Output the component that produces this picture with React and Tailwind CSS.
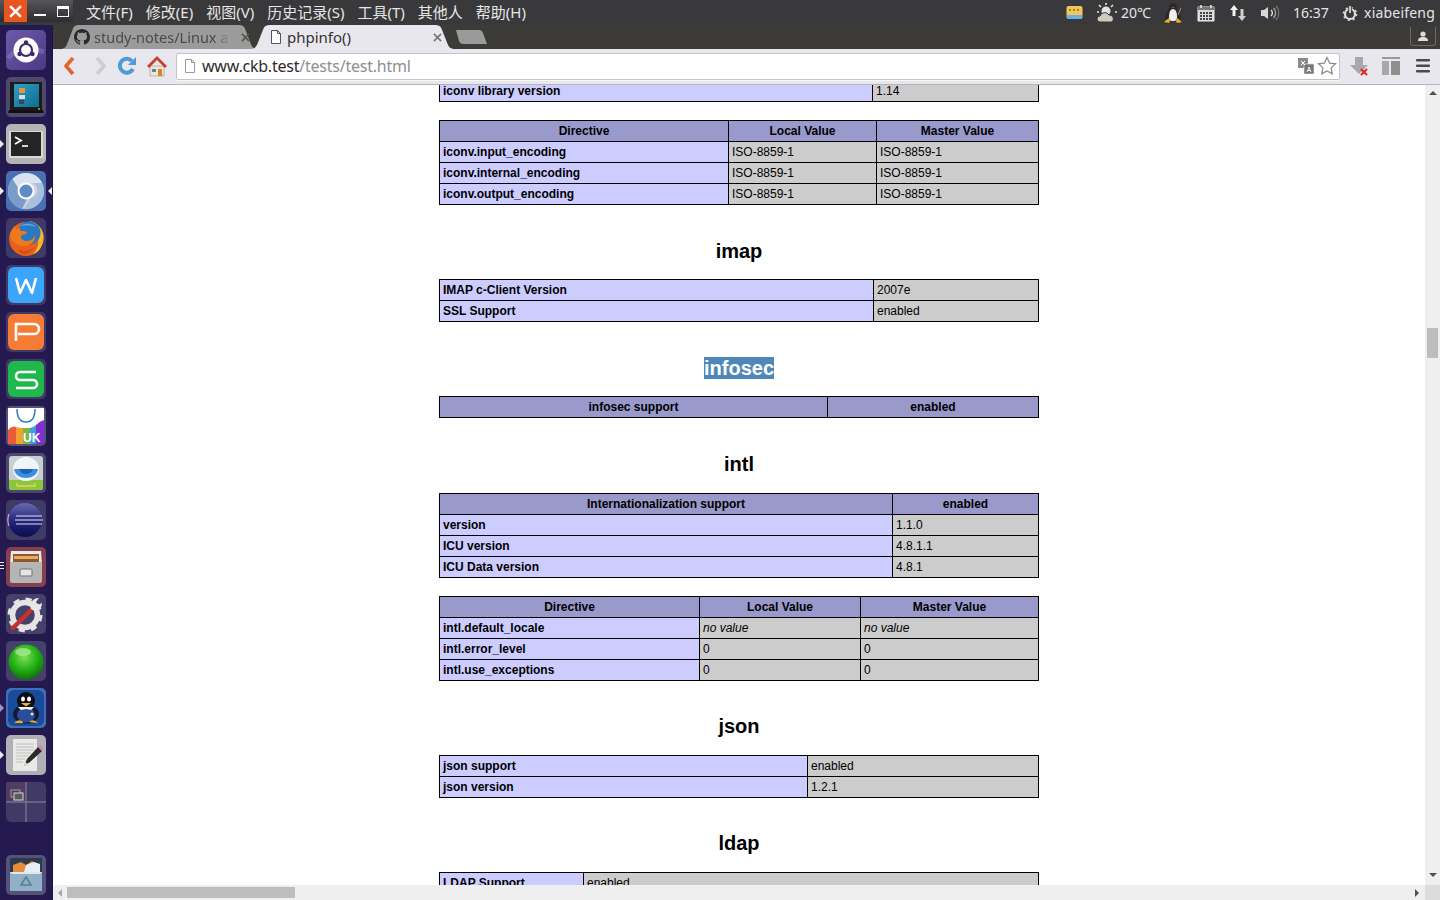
const Sec = ({ title, selected }) => (
  <h2 className="text-center text-[20px] leading-[23px] font-bold text-black">
    <span className={selected ? 'bg-[#4f87ba] text-white' : ''}>{title}</span>
  </h2>
);

const InfoTable = ({ widths, head, rows, className = '' }) => (
  <div className={`mx-auto w-[600px] ${className}`}>
    <table className="w-[599px] table-fixed border-collapse text-[12px] leading-[14px] text-black">
      <colgroup>
        {widths.map((w, i) => <col key={i} style={{ width: w }} />)}
      </colgroup>
      <tbody>
        {head && (
          <tr className="h-[21px] bg-[#9999cc] font-bold">
            {head.map((h, i) => <th key={i} className="border border-black px-[3px] py-0 text-center">{h}</th>)}
          </tr>
        )}
        {rows.map((r, i) => (
          <tr key={i} className="h-[21px]">
            {r.map((c, j) => (
              <td key={j} className={`border border-black px-[3px] py-0 whitespace-nowrap ${j === 0 ? 'bg-[#ccccff] font-bold' : 'bg-[#cccccc]'} ${c === 'no value' ? 'italic' : ''}`}>{c}</td>
            ))}
          </tr>
        ))}
      </tbody>
    </table>
  </div>
);

const Tile = ({ bg = 'bg-[#3f3a66]', children, left, right }) => (
  <div className={`relative h-10 w-10 shrink-0 rounded-[5px] ${bg}`}>
    {children}
    {left === 'solid' && <span className="absolute top-[16px] left-[-6px] h-0 w-0 border-y-[4px] border-l-[4px] border-y-transparent border-l-[#e8e8e8]" />}
    {left === 'outline' && <span className="absolute top-[16px] left-[-6px] h-0 w-0 border-y-[4px] border-l-[4px] border-y-transparent border-l-[#9a9ac0]" />}
    {left === 'lines' && (
      <span className="absolute top-[15px] left-[-6px] flex w-[4px] flex-col gap-[2px]">
        <i className="h-px bg-[#e8e8e8]" /><i className="h-px bg-[#e8e8e8]" /><i className="h-px bg-[#e8e8e8]" />
      </span>
    )}
    {right && <span className="absolute top-[16px] right-[-6px] h-0 w-0 border-y-[4px] border-r-[4px] border-y-transparent border-r-[#e8e8e8]" />}
  </div>
);

const Ico = ({ children }) => <svg viewBox="0 0 40 40" className="h-10 w-10">{children}</svg>;

const Launcher = () => (
  <aside className="flex w-[53px] shrink-0 flex-col items-start border-r border-[#1d1440] bg-[#251a50] pt-[5px] pl-[6px]">
    <div className="flex flex-col gap-[7px]">
      <Tile bg="bg-gradient-to-br from-[#6d5aa8] to-[#4a3a85]">
        <Ico>
          <path d="M2 28 Q14 14 38 22" stroke="#8d7cc0" strokeWidth="5" fill="none" opacity=".5" />
          <circle cx="20" cy="20" r="12.500" fill="#fff" />
          <circle cx="20" cy="20" r="6" fill="none" stroke="#3a2a70" strokeWidth="2.200" />
          <circle cx="20" cy="12.500" r="2.200" fill="#3a2a70" />
          <circle cx="13.500" cy="24" r="2.200" fill="#3a2a70" />
          <circle cx="26.500" cy="24" r="2.200" fill="#3a2a70" />
        </Ico>
      </Tile>
      <Tile bg="bg-[#4d4a6d]">
        <Ico>
          <path d="M4 5h32v28H4z" fill="#1b1b1b" />
          <defs><linearGradient id="scr" x1="0" y1="0" x2="1" y2="1"><stop offset="0" stopColor="#2f9fc8" /><stop offset="1" stopColor="#0f6d90" /></linearGradient></defs>
          <path d="M8 7h25v23H8z" fill="url(#scr)" />
          <path d="M13 11h6v5h-6z" fill="#e8943c" />
          <path d="M13 18h6v4h-6z" fill="#d8dde2" />
          <path d="M13 23h5v4h-5z" fill="#39455a" />
          <path d="M3 33h34l1 3H2z" fill="#111" />
          <circle cx="33" cy="32" r="1" fill="#5ed040" />
        </Ico>
      </Tile>
      <Tile bg="bg-[#b4b4b4]" left="solid">
        <Ico>
          <path d="M3 7h34v27H3z" fill="#d9d9d9" />
          <path d="M5 8h30v24H5z" fill="#242424" />
          <path d="M9 13l6 3.500-6 3.500" fill="none" stroke="#fff" strokeWidth="1.800" />
          <path d="M16 22h6" stroke="#fff" strokeWidth="1.600" />
        </Ico>
      </Tile>
      <Tile bg="bg-[#4a70b4]" left="solid" right>
        <Ico>
          <circle cx="20" cy="20" r="18" fill="#c6d4e6" />
          <path d="M20 2a18 18 0 0 1 16 10H20a8 8 0 0 0-7.500 5L6.500 8A18 18 0 0 1 20 2z" fill="#d9e2ee" />
          <path d="M2 20a18 18 0 0 1 4.500-12l7 11 7.500 9-5 10A18 18 0 0 1 2 20z" fill="#7a9cc8" />
          <path d="M36 12a18 18 0 0 1-18 26l7-11a8 8 0 0 0 2-15z" fill="#a9bfdc" />
          <circle cx="20" cy="20" r="8.500" fill="#fff" />
          <circle cx="20" cy="20" r="6.500" fill="#5e8cc6" />
        </Ico>
      </Tile>
      <Tile>
        <Ico>
          <circle cx="20" cy="21" r="17" fill="#e8601c" />
          <path d="M24 3a17 17 0 0 1 12 24c-2 5-5 8-9 9 5-5 7-12 4-19-2-5-4-10-7-14z" fill="#f8b62a" />
          <circle cx="23" cy="15" r="11.500" fill="#2a78c0" />
          <path d="M14 8c5-3 12-3 16 1-5-2-10-2-16-1z" fill="#5fb0e4" />
          <path d="M4 17c1-4 3-7 5-9l1 4c1-1 2-2 4-3-1 2 0 3 1 4 2 0 5 0 6 2-1 2-5 1-6 3-1 3 3 5 6 5 4 0 7-3 8-6 1 6-4 11-11 11C10 28 5 23 4 17z" fill="#ef7a1e" />
          <path d="M12 31c5 3 12 2 16-2-2 5-8 8-13 6-1 0-2-2-3-4z" fill="#d84a14" />
        </Ico>
      </Tile>
      <Tile>
        <Ico>
          <rect x="2" y="2" width="36" height="36" rx="6" fill="#3aa5fa" />
          <path d="M10 13l4 15 6-13 6 13 4-15" fill="none" stroke="#fff" strokeWidth="2.600" strokeLinejoin="round" />
        </Ico>
      </Tile>
      <Tile>
        <Ico>
          <rect x="2" y="2" width="36" height="36" rx="6" fill="#f67b35" />
          <path d="M10 29V12h18a4.500 4.500 0 0 1 0 10H12" fill="none" stroke="#fff" strokeWidth="2.600" />
        </Ico>
      </Tile>
      <Tile>
        <Ico>
          <rect x="2" y="2" width="36" height="36" rx="6" fill="#1fb84c" />
          <path d="M30 13H14a4 4 0 0 0 0 8h13a4 4 0 0 1 0 8H10" fill="none" stroke="#fff" strokeWidth="2.600" />
        </Ico>
      </Tile>
      <Tile bg="bg-[#55527a]">
        <Ico>
          <path d="M2 2h36v36H2z" fill="#fff" />
          <path d="M11 3c0 10 4 13 9 13s9-3 9-13" fill="none" stroke="#2f7fc0" strokeWidth="1.500" />
          <path d="M2 24q4-5 8-3v17H2z" fill="#ea5b3a" />
          <path d="M10 21q4 1 7 1v16h-7z" fill="#f2a02f" />
          <path d="M17 22h7v16h-7z" fill="#78b83a" />
          <path d="M24 22q4-1 6-3v19h-6z" fill="#3ba0dc" />
          <path d="M30 19q4-4 8-5v24h-8z" fill="#8030d8" />
          <text x="17" y="36" fontFamily="Liberation Sans" fontWeight="700" fontSize="12" fill="#fff">UK</text>
        </Ico>
      </Tile>
      <Tile bg="bg-[#4c4a6c]">
        <Ico>
          <rect x="3" y="3" width="34" height="34" rx="3" fill="#c9ced2" />
          <path d="M3 27h34v7a3 3 0 0 1-3 3H6a3 3 0 0 1-3-3z" fill="#8cc63a" />
          <ellipse cx="20" cy="16" rx="13" ry="12" fill="#f2f5f8" />
          <path d="M8 16h24c-1 6-6 9-12 9S9 22 8 16z" fill="#3b8fe0" />
          <path d="M13 16h14c-1 3-4 5-7 5s-6-2-7-5z" fill="#1d62b6" />
          <path d="M11 30v3h18v-3" fill="none" stroke="#e6d45c" strokeWidth="1.300" />
        </Ico>
      </Tile>
      <Tile>
        <Ico>
          <defs><linearGradient id="ecl" x1="0" y1="0" x2="0" y2="1"><stop offset="0" stopColor="#6a6ab0" /><stop offset=".55" stopColor="#23237a" /><stop offset="1" stopColor="#0c0c50" /></linearGradient></defs>
          <circle cx="19" cy="20" r="17" fill="url(#ecl)" />
          <path d="M3 26a17 17 0 0 1 0-12" fill="none" stroke="#d8a0c0" strokeWidth="1.200" />
          <path d="M10 16h26M9 20h28M10 24h26" stroke="#e2e2f2" strokeWidth="1" />
        </Ico>
      </Tile>
      <Tile bg="bg-[#84404f]" left="lines">
        <Ico>
          <path d="M5 4h30l1 13H4z" fill="#e8e8e8" />
          <path d="M7 7h26v8H7z" fill="#8a5a30" />
          <path d="M8 9h24v3H8z" fill="#eea860" />
          <path d="M4 15h32v19a2 2 0 0 1-2 2H6a2 2 0 0 1-2-2z" fill="#b5b5b5" />
          <rect x="14" y="22" width="12" height="7" rx="1" fill="#e4e4e4" stroke="#707070" />
        </Ico>
      </Tile>
      <Tile bg="bg-[#45416a]">
        <Ico>
          <circle cx="19" cy="21" r="12.500" fill="none" stroke="#e4e4e4" strokeWidth="5.500" />
          <circle cx="19" cy="21" r="15.500" fill="none" stroke="#e4e4e4" strokeWidth="4" strokeDasharray="6 6.200" />
          <path d="M7 34L27 14" stroke="#c8322c" strokeWidth="4.500" strokeLinecap="round" />
          <path d="M25 15c-2-5 1-11 8-11l-3 4 2 3 4-2c0 6-5 10-11 6z" fill="#e8e8e8" />
        </Ico>
      </Tile>
      <Tile bg="bg-[#45416a]">
        <Ico>
          <defs><radialGradient id="ball" cx=".45" cy=".35" r=".7"><stop offset="0" stopColor="#7ee05c" /><stop offset=".55" stopColor="#22b012" /><stop offset="1" stopColor="#0a6a0a" /></radialGradient></defs>
          <circle cx="20" cy="21" r="17.500" fill="url(#ball)" />
          <ellipse cx="17" cy="11" rx="8" ry="4" fill="#b4ec9c" opacity=".7" />
        </Ico>
      </Tile>
      <Tile bg="bg-[#3f6fb8]" left="outline">
        <Ico>
          <rect x="2" y="2" width="36" height="36" rx="6" fill="#1a4a9a" />
          <ellipse cx="20" cy="26" rx="13" ry="9.500" fill="#131a30" />
          <circle cx="20" cy="13" r="9" fill="#0e0e14" />
          <ellipse cx="20" cy="27" rx="9" ry="7.500" fill="#2a4e98" />
          <ellipse cx="17" cy="11" rx="2" ry="2.500" fill="#fff" /><ellipse cx="23" cy="11" rx="2" ry="2.500" fill="#fff" />
          <path d="M15 15h10l-5 3.500z" fill="#f4b01e" />
          <path d="M12 19h16l-3 3-5-1-5 1z" fill="#f2f2f2" />
          <path d="M8 35q5-5 9-1v1zM23 34q4-4 9 1z" fill="#f4a81e" />
          <circle cx="26" cy="26" r="1.500" fill="#ddd" />
        </Ico>
      </Tile>
      <Tile bg="bg-[#b0afb6]" left="solid">
        <Ico>
          <path d="M7 4h24v32H7z" fill="#e9e9e9" />
          <path d="M10 9h18M10 12h18M10 15h18M10 18h15M10 21h12M10 24h9M10 27h7" stroke="#b5b5b5" strokeWidth=".8" />
          <path d="M18 31l3-7 11-12 4 4-12 11z" fill="#2a2a2a" />
          <path d="M32 12l2-2 3 3-1 3z" fill="#e080a8" />
          <path d="M18 31l1-4 3 2z" fill="#e8d8a0" />
        </Ico>
      </Tile>
      <Tile>
        <Ico>
          <path d="M0 0h20v20H0z" fill="#5a3f60" opacity=".7" />
          <path d="M20 0v40M0 20h40" stroke="#8a86a8" strokeWidth="1" />
          <rect x="5" y="8" width="9" height="7" fill="none" stroke="#a0a0a0" />
          <rect x="8" y="11" width="9" height="7" fill="#5a5a5a" stroke="#d8d8d8" />
        </Ico>
      </Tile>
    </div>
    <div className="mt-[33px]">
      <Tile bg="bg-[#55527a]">
        <Ico>
          <path d="M4 3h32v14H4z" fill="#2b3a4c" />
          <path d="M7 10l8-3 5 3 6-4 3 2 5 3v6H7z" fill="#e88a3c" />
          <path d="M20 10l8-3 6 2v8H18z" fill="#e8eef2" />
          <path d="M4 17h32v19H4z" fill="#8fb0c8" />
          <path d="M4 17h32l-2 2H6z" fill="#dfe8ee" />
          <path d="M20 22l5 8H15z" fill="none" stroke="#5f7e96" strokeWidth="1.600" />
        </Ico>
      </Tile>
    </div>
  </aside>
);

const TabShape = ({ fill }) => (
  <svg viewBox="0 0 200 24" preserveAspectRatio="none" className="absolute inset-0 h-full w-full">
    <path d="M0 24 C5 24 6 22 8 17 L13 4 C14 1 16 0 19 0 H181 C184 0 186 1 187 4 L192 17 C194 22 195 24 200 24 Z" fill={fill} />
  </svg>
);

const TopBar = () => (
  <header className="flex h-[25px] shrink-0 items-center bg-[#39393b] text-[14px] text-[#e6e6e6]">
    <div className="flex h-[22px] w-[73px] shrink-0 items-center self-start bg-gradient-to-b from-[#55555a] to-[#2e2e30]">
      <div className="ml-[4px] flex h-[22px] w-[23px] items-center justify-center bg-[#e9541f]">
        <svg viewBox="0 0 12 12" className="h-[13px] w-[13px]"><path d="M1 1l10 10M11 1L1 11" stroke="#fff" strokeWidth="2.400" /></svg>
      </div>
      <span className="mt-[7px] ml-[7px] h-[2px] w-[12px] bg-white" />
      <span className="ml-[11px] h-[11px] w-[12px] border border-t-[3px] border-white" />
    </div>
    <nav className="ml-[13px] flex gap-[13px] font-['Noto_Sans','Noto_Sans_CJK_SC',sans-serif] text-[15px] whitespace-nowrap">
      {['文件(F)', '修改(E)', '视图(V)', '历史记录(S)', '工具(T)', '其他人', '帮助(H)'].map(m => <span key={m}>{m}</span>)}
    </nav>
    <div className="ml-auto flex items-center pr-[5px] font-['Noto_Sans',sans-serif] whitespace-nowrap">
      <svg viewBox="0 0 17 16" className="ml-[1px] h-4 w-[17px]">
        <rect x="0.500" y="1" width="16" height="13" rx="2" fill="#f2c65c" />
        <path d="M1 10h15v3a1 1 0 0 1-1 1H2a1 1 0 0 1-1-1z" fill="#6ab0e0" />
        <path d="M3 5h2M7 5h2M11 5h2" stroke="#8a6a20" strokeWidth="1.500" />
      </svg>
      <svg viewBox="0 0 22 20" className="ml-[13px] h-5 w-[22px]">
        <circle cx="10" cy="8" r="4.500" fill="#e4e4e4" />
        <path d="M10 0v2M3 2l2 2M17 2l-2 2M1 9h2M19 9h2" stroke="#e4e4e4" strokeWidth="1.600" />
        <path d="M4 19a3 3 0 0 1 0-6 5 5 0 0 1 9-1 4 4 0 0 1 3 7z" fill="#cfcabf" stroke="#39393b" />
      </svg>
      <span className="ml-[3px] w-[30px]">20℃</span>
      <svg viewBox="0 0 18 20" className="ml-[13px] h-5 w-[18px]">
        <path d="M9 0c3 0 4 3 4 5 0 3 4 5 4 10l-3 3H4l-3-3c0-5 4-7 4-10 0-2 1-5 4-5z" fill="#2a2a2a" />
        <path d="M9 6c3 0 4 4 4 8s-2 4-4 4-4 0-4-4 1-8 4-8z" fill="#eee" />
        <path d="M0 19l5-4 1 3-1 2zM18 19l-5-4-1 3 1 2z" fill="#f0b020" />
        <path d="M8 4h2l-1 1z" fill="#f0b020" />
        <path d="M14 12l3-7" stroke="#b89060" strokeWidth="1" />
      </svg>
      <svg viewBox="0 0 18 18" className="ml-[15px] h-[18px] w-[18px]">
        <path d="M1 3h16v14H1z" fill="#d8d8d8" stroke="#eee" />
        <path d="M1 3h16v3H1z" fill="#777" />
        <path d="M4 1v3M14 1v3" stroke="#eee" strokeWidth="1.500" />
        <path d="M3 8h2v2H3zM6 8h2v2H6zM9 8h2v2H9zM12 8h3v2h-3zM3 11h2v2H3zM6 11h2v2H6zM9 11h2v2H9zM12 11h3v2h-3zM3 14h2v2H3zM6 14h2v2H6zM9 14h2v2H9zM12 14h3v2h-3z" fill="#444" />
      </svg>
      <svg viewBox="0 0 18 18" className="ml-[14px] h-[18px] w-[18px]">
        <path d="M5 1l4 5H6.500v6h-3V6H1z" fill="#f2f2f2" />
        <path d="M13 17l4-5h-2.500V5h-3v7H9z" fill="#cfcfcf" />
      </svg>
      <svg viewBox="0 0 20 16" className="ml-[13px] h-4 w-5">
        <path d="M1 5h3l4-3v12l-4-3H1z" fill="#d8d8d8" />
        <path d="M11 5a4 4 0 0 1 0 6" fill="none" stroke="#ddd" strokeWidth="1.400" />
        <path d="M13.500 3a7 7 0 0 1 0 10" fill="none" stroke="#aaa" strokeWidth="1.300" />
        <path d="M16 1a10 10 0 0 1 0 14" fill="none" stroke="#777" strokeWidth="1.200" />
      </svg>
      <span className="ml-[13px] w-[36px]">16:37</span>
      <svg viewBox="0 0 16 16" className="ml-[13px] h-4 w-4">
        <circle cx="8" cy="9" r="5" fill="none" stroke="#ddd" strokeWidth="2.200" />
        <circle cx="8" cy="9" r="6.500" fill="none" stroke="#ddd" strokeWidth="1.600" strokeDasharray="2 3.100" />
        <path d="M8 1v7" stroke="#39393b" strokeWidth="3.500" />
        <path d="M8 1v7" stroke="#e8e8e8" strokeWidth="1.600" />
      </svg>
      <span className="ml-[6px] tracking-[0.2px]">xiabeifeng</span>
    </div>
  </header>
);

const TabStrip = () => (
  <div className="flex h-[24px] shrink-0 items-end bg-[#3c3b37] pl-[7px] font-['Noto_Sans',sans-serif] text-[15px] leading-[20px] whitespace-nowrap">
    <div className="relative flex h-[24px] w-[198px] items-center pl-[14px] text-[#4a4a4a]">
      <TabShape fill="#9b9b9b" />
      <svg viewBox="0 0 16 16" className="relative h-4 w-4 shrink-0"><path fill="#2a2a2a" d="M8 0C3.580 0 0 3.580 0 8c0 3.540 2.290 6.530 5.470 7.590.4.070.55-.17.55-.38 0-.19-.01-.82-.01-1.490-2.010.37-2.530-.49-2.690-.94-.09-.23-.48-.94-.82-1.130-.28-.15-.68-.52-.01-.53.63-.01 1.080.58 1.230.82.720 1.210 1.870.87 2.330.66.070-.52.280-.87.510-1.070-1.780-.2-3.640-.89-3.640-3.950 0-.87.310-1.590.820-2.150-.08-.2-.36-1.020.08-2.120 0 0 .67-.21 2.200.82.640-.18 1.320-.27 2-.27s1.360.09 2 .27c1.530-1.040 2.200-.82 2.200-.82.440 1.100.16 1.920.08 2.120.51.560.82 1.270.82 2.150 0 3.070-1.870 3.750-3.650 3.950.290.25.540.73.540 1.480 0 1.070-.01 1.930-.01 2.200 0 .21.150.46.550.38A8.010 8.010 0 0 0 16 8c0-4.420-3.580-8-8-8z" /></svg>
      <span className="relative ml-[4px] w-[136px] text-[14.5px] [mask-image:linear-gradient(to_right,black_88%,transparent)]">study-notes/Linux a</span>
      <svg viewBox="0 0 10 10" className="relative ml-[11px] h-[9px] w-[9px]"><path d="M1 1l8 8M9 1L1 9" stroke="#555" strokeWidth="1.800" /></svg>
    </div>
    <div className="relative -ml-[8px] flex h-[24px] w-[205px] items-center pr-[13px] pl-[20px] text-[#333]">
      <TabShape fill="#e9e7ee" />
      <svg viewBox="0 0 12 14" className="relative h-[14px] w-3 shrink-0"><path d="M1.500.500h6l3 3v10h-9z" fill="#fff" stroke="#555" /><path d="M7.500.500v3h3" fill="none" stroke="#555" /></svg>
      <span className="relative ml-[5px]">phpinfo()</span>
      <svg viewBox="0 0 10 10" className="relative ml-auto h-[9px] w-[9px]"><path d="M1 1l8 8M9 1L1 9" stroke="#777" strokeWidth="1.800" /></svg>
    </div>
    <svg viewBox="0 0 34 16" className="mb-[4px] h-4 w-[34px]"><path d="M1 1h23c2 0 3 1 4 3l4 11H8c-2 0-3-1-4-3z" fill="#9a9a9a" /></svg>
    <div className="mr-[4px] mb-[3px] ml-auto flex h-[19px] w-[26px] items-center justify-center self-end rounded-b-[3px] border border-t-0 border-[#6a6a6a]">
      <svg viewBox="0 0 12 11" className="h-[11px] w-3"><circle cx="6" cy="3" r="2.600" fill="#ddd" /><path d="M1 10c0-3 2-4 5-4s5 1 5 4z" fill="#ddd" /></svg>
    </div>
  </div>
);

const Toolbar = () => (
  <div className="flex h-[36px] shrink-0 items-center border-b border-[#b5b5b8] bg-[#e9e7ee] pb-[1px]">
    <svg viewBox="0 0 14 20" className="ml-[10px] h-5 w-[14px]"><path d="M10 2L3 10l7 8" fill="none" stroke="#e2662a" strokeWidth="3.600" strokeLinejoin="round" /></svg>
    <svg viewBox="0 0 14 20" className="ml-[16px] h-5 w-[14px]"><path d="M4 2l7 8-7 8" fill="none" stroke="#cfcdd2" strokeWidth="3.600" strokeLinejoin="round" /></svg>
    <svg viewBox="0 0 20 20" className="ml-[10px] h-5 w-5"><path d="M16 13a7 7 0 1 1-1-8" fill="none" stroke="#4f9ad8" strokeWidth="4" /><path d="M19 1v8h-8z" fill="#4f9ad8" /></svg>
    <svg viewBox="0 0 22 22" className="ml-[9px] h-[22px] w-[22px]">
      <path d="M4 11h14v10H4z" fill="#f0e6d0" stroke="#a09080" strokeWidth=".6" />
      <path d="M11 1L1 11l2 2 8-8 8 8 2-2z" fill="#c8402c" />
      <path d="M12 14h4v7h-4z" fill="#c98a30" />
      <path d="M6 14h4v3H6z" fill="#4a88c0" />
    </svg>
    <div className="ml-[8px] flex h-[27px] w-[1164px] items-center rounded-[2px] border border-[#c4c4c8] bg-white font-['Noto_Sans',sans-serif] text-[16px] tracking-[-0.23px] whitespace-nowrap shadow-[0_1px_0_#f7f7f7]">
      <svg viewBox="0 0 12 14" className="ml-[7px] h-[14px] w-3 shrink-0"><path d="M1.500.500h6l3 3v10h-9z" fill="#fff" stroke="#999" /><path d="M7.500.500v3h3" fill="none" stroke="#999" /></svg>
      <span className="ml-[6px] text-[#2b2b2b]">www.ckb.test</span>
      <span className="text-[#8f8f8f]">/tests/test.html</span>
      <svg viewBox="0 0 16 16" className="ml-auto h-4 w-4">
        <path d="M0 0h10v10H0z" fill="#8a8a8a" />
        <path d="M6 6h10v10H6z" fill="#777" stroke="#e9e7ee" strokeWidth=".6" />
        <path d="M3 3l4 4M7 3L3 7" stroke="#fff" strokeWidth="1" />
        <path d="M9 14l2-5 2 5M10 12.500h2" fill="none" stroke="#fff" strokeWidth=".9" />
      </svg>
      <svg viewBox="0 0 20 20" className="mr-[2px] ml-[3px] h-5 w-5"><path d="M10 1.500l2.600 5.600 6 .7-4.500 4.100 1.200 6L10 15l-5.300 2.900 1.200-6L1.400 7.800l6-.7z" fill="#fff" stroke="#8a8a8a" strokeWidth="1.200" /></svg>
    </div>
    <svg viewBox="0 0 20 20" className="ml-[9px] h-5 w-5">
      <path d="M6 1h8v8h5l-9 9-9-9h5z" fill="#a8a8ac" />
      <path d="M12 13l6 6M18 13l-6 6" stroke="#e02424" strokeWidth="2" />
    </svg>
    <svg viewBox="0 0 18 18" className="ml-[13px] h-[18px] w-[18px]"><path d="M0 0h18v2H0z" fill="#9a9a9a" /><path d="M0 4h7v14H0z" fill="#a8a8a8" /><path d="M9 4h9v14H9z" fill="#8f8f8f" /></svg>
    <svg viewBox="0 0 14 14" className="ml-[16px] h-[14px] w-[14px]"><path d="M1 0h12a1 1 0 0 1 0 2.500H1a1 1 0 0 1 0-2.500zM1 5.500h12a1 1 0 0 1 0 2.500H1a1 1 0 0 1 0-2.500zM1 11h12a1 1 0 0 1 0 2.500H1a1 1 0 0 1 0-2.500z" fill="#4a4a4a" /></svg>
  </div>
);

const Page = () => (
  <div className="flex-1 overflow-hidden bg-white font-['Liberation_Sans',sans-serif]">
    <InfoTable className="-mt-[5px]" widths={[433, 166]} rows={[['iconv library version', '1.14']]} />
    <InfoTable className="mt-[18px]" widths={[289, 148, 162]} head={['Directive', 'Local Value', 'Master Value']} rows={[
      ['iconv.input_encoding', 'ISO-8859-1', 'ISO-8859-1'],
      ['iconv.internal_encoding', 'ISO-8859-1', 'ISO-8859-1'],
      ['iconv.output_encoding', 'ISO-8859-1', 'ISO-8859-1'],
    ]} />
    <div className="mt-[35px]"><Sec title="imap" /></div>
    <InfoTable className="mt-[16px]" widths={[434, 165]} rows={[['IMAP c-Client Version', '2007e'], ['SSL Support', 'enabled']]} />
    <div className="mt-[35px]"><Sec title="infosec" selected /></div>
    <InfoTable className="mt-[16px]" widths={[388, 211]} head={['infosec support', 'enabled']} rows={[]} />
    <div className="mt-[35px]"><Sec title="intl" /></div>
    <InfoTable className="mt-[17px]" widths={[453, 146]} head={['Internationalization support', 'enabled']} rows={[
      ['version', '1.1.0'], ['ICU version', '4.8.1.1'], ['ICU Data version', '4.8.1'],
    ]} />
    <InfoTable className="mt-[18px]" widths={[260, 161, 178]} head={['Directive', 'Local Value', 'Master Value']} rows={[
      ['intl.default_locale', 'no value', 'no value'], ['intl.error_level', '0', '0'], ['intl.use_exceptions', '0', '0'],
    ]} />
    <div className="mt-[34px]"><Sec title="json" /></div>
    <InfoTable className="mt-[17px]" widths={[368, 231]} rows={[['json support', 'enabled'], ['json version', '1.2.1']]} />
    <div className="mt-[34px]"><Sec title="ldap" /></div>
    <InfoTable className="mt-[17px]" widths={[144, 455]} rows={[['LDAP Support', 'enabled']]} />
  </div>
);

const VScroll = () => (
  <div className="flex w-[15px] shrink-0 flex-col items-center bg-[#efefef] pt-[6px]">
    <span className="h-0 w-0 border-x-[4px] border-b-[4px] border-x-transparent border-b-[#505050]" />
    <span className="mt-[233px] h-[30px] w-[11px] bg-[#bdbdbd]" />
    <span className="mt-[515px] h-0 w-0 border-x-[4px] border-t-[4px] border-x-transparent border-t-[#505050]" />
  </div>
);

const HScroll = () => (
  <div className="flex h-[15px] shrink-0 items-center bg-[#efefef]">
    <span className="ml-[5px] h-0 w-0 border-y-[4px] border-r-[4px] border-y-transparent border-r-[#a8a8a8]" />
    <span className="ml-[5px] h-[11px] w-[228px] bg-[#bdbdbd]" />
    <span className="mr-[6px] ml-auto h-0 w-0 border-y-[4px] border-l-[4px] border-y-transparent border-l-[#505050]" />
    <span className="h-[15px] w-[15px] bg-[#dcdcdc]" />
  </div>
);

export default function App() {
  return (
    <div className="flex h-[900px] w-[1440px] flex-col overflow-hidden bg-white">
      <TopBar />
      <div className="flex min-h-0 flex-1">
        <Launcher />
        <main className="flex min-w-0 flex-1 flex-col">
          <TabStrip />
          <Toolbar />
          <div className="flex min-h-0 flex-1">
            <Page />
            <VScroll />
          </div>
          <HScroll />
        </main>
      </div>
    </div>
  );
}
